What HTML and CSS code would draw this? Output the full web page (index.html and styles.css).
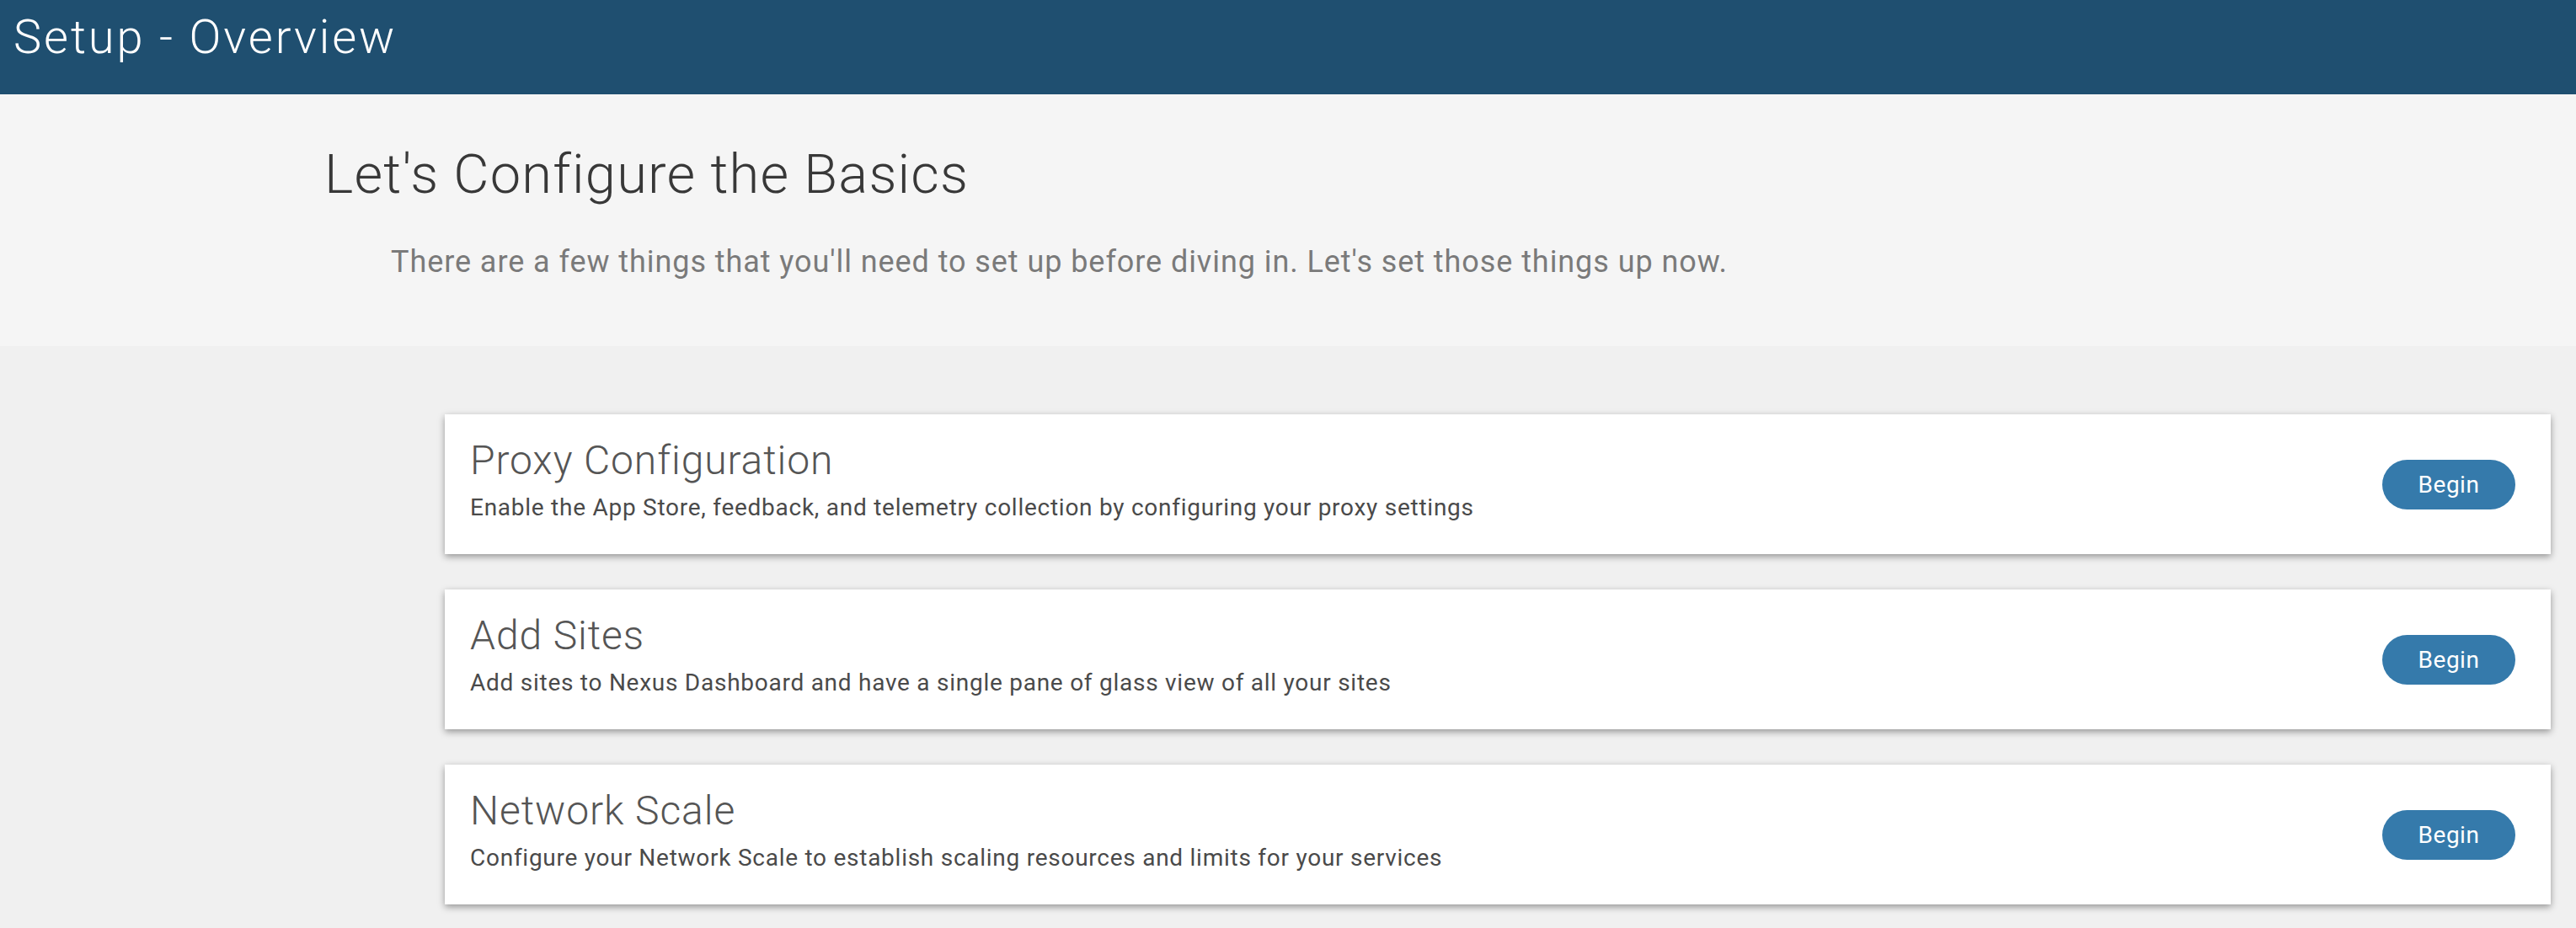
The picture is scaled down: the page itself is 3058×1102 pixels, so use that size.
FILE: index.html
```html
<!DOCTYPE html>
<html lang="en">
<head>
<meta charset="utf-8">
<title>Setup - Overview</title>
<link rel="stylesheet" href="styles.css">
</head>
<body>
<header class="topbar">
  <h1 class="topbar-title">Setup - Overview</h1>
</header>
<section class="hero">
  <h2 class="hero-title">Let's Configure the Basics</h2>
  <p class="hero-sub">There are a few things that you'll need to set up before diving in. Let's set those things up now.</p>
</section>
<main class="cards">
  <div class="card">
    <div class="card-text">
      <h3 class="card-title">Proxy Configuration</h3>
      <p class="card-desc">Enable the App Store, feedback, and telemetry collection by configuring your proxy settings</p>
    </div>
    <button class="btn">Begin</button>
  </div>
  <div class="card">
    <div class="card-text">
      <h3 class="card-title">Add Sites</h3>
      <p class="card-desc">Add sites to Nexus Dashboard and have a single pane of glass view of all your sites</p>
    </div>
    <button class="btn">Begin</button>
  </div>
  <div class="card">
    <div class="card-text">
      <h3 class="card-title">Network Scale</h3>
      <p class="card-desc">Configure your Network Scale to establish scaling resources and limits for your services</p>
    </div>
    <button class="btn">Begin</button>
  </div>
</main>
</body>
</html>
```
FILE: styles.css
```css
* { box-sizing: border-box; }
html, body {
  margin: 0;
  padding: 0;
}
body {
  font-family: Roboto, "Liberation Sans", sans-serif;
  background: #f0f0f0;
  width: 3058px;
  height: 1102px;
  overflow: hidden;
}
.topbar {
  height: 112px;
  background: #1f4f70;
  padding: 11px 0 0 16px;
}
.topbar-title {
  margin: 0;
  font-size: 56px;
  font-weight: 300;
  line-height: normal;
  letter-spacing: 2.9px;
  color: #ffffff;
}
.hero {
  height: 299px;
  background: #f5f5f5;
  padding: 57px 0 0 385px;
}
.hero-title {
  margin: 0;
  font-size: 65px;
  font-weight: 300;
  line-height: normal;
  letter-spacing: 1.2px;
  color: #383838;
}
.hero-sub {
  margin: 45px 0 0 79px;
  font-size: 36px;
  font-weight: 400;
  line-height: normal;
  letter-spacing: 0.93px;
  color: #7a7a7a;
}
.cards {
  display: flex;
  flex-direction: column;
  gap: 42px;
  padding: 81px 30px 0 528px;
}
.card {
  height: 166px;
  background: #ffffff;
  box-shadow: 0 3px 8px rgba(0, 0, 0, 0.38);
  display: flex;
  align-items: center;
  justify-content: space-between;
  padding: 0 42px 0 30px;
}
.card-text {
  align-self: flex-start;
  padding-top: 26px;
}
.card-title {
  margin: 0;
  font-size: 48px;
  font-weight: 300;
  line-height: normal;
  letter-spacing: 0.9px;
  color: #555555;
}
.card-desc {
  margin: 11px 0 0 0;
  font-size: 28px;
  font-weight: 400;
  line-height: normal;
  letter-spacing: 0.74px;
  color: #4a4a4a;
}
.btn {
  width: 158px;
  height: 59px;
  border: none;
  border-radius: 30px;
  background: #357aab;
  color: #ffffff;
  font-family: Roboto, "Liberation Sans", sans-serif;
  font-size: 28px;
  font-weight: 400;
  letter-spacing: 0.5px;
  padding: 0;
}
```
